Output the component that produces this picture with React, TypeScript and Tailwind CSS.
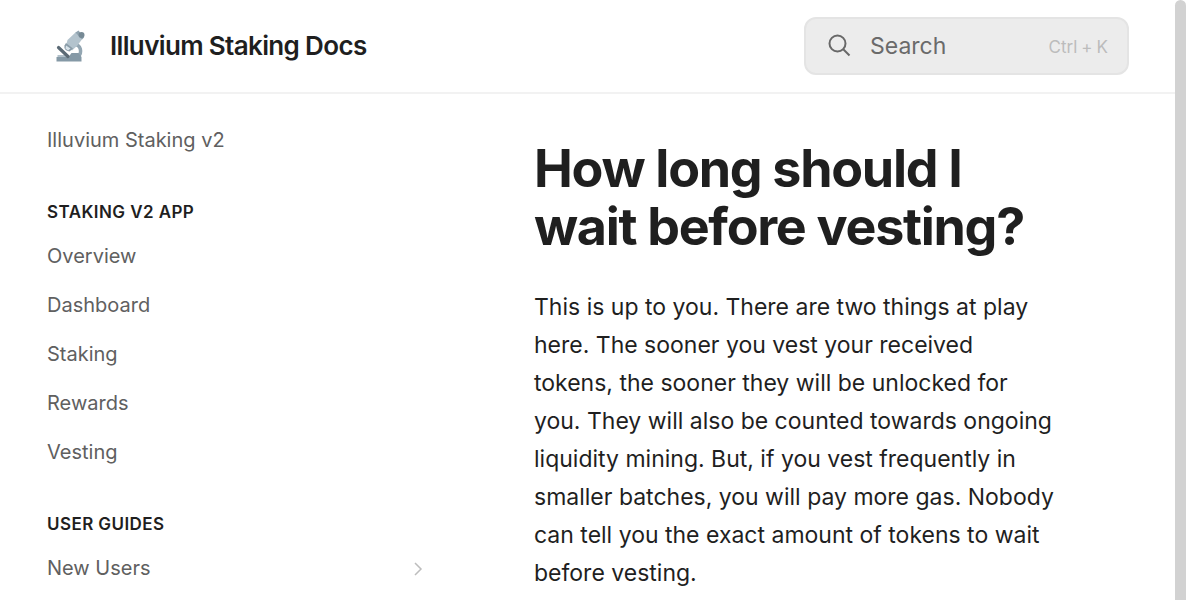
const font = "font-['Inter',sans-serif]";

function Microscope() {
  return (
    <svg viewBox="0 0 32 32" className="size-8 shrink-0" aria-hidden="true">
      <path d="M20 14.500c7 0 8.500 8 4 12.500" fill="none" stroke="#93a6b2" strokeWidth="3.500" />
      <path d="M2.500 27h12l3-4h7l3 4v4.500h-25z" fill="#8599a6" />
      <path d="M3.500 25h8l2 2h-10z" fill="#b0bfc9" />
      <path d="M4.500 17.500 14 26.500" stroke="#5b6a75" strokeWidth="3.200" strokeLinecap="round" />
      <path d="m13.500 10 8.500-8 7 6-6 8-5 4.500-6-5z" fill="#b3c3cd" />
      <path d="m12 13 7 5.500-3.500 3q-6-1-5-6z" fill="#8a9ca8" />
      <path d="m12 15.500 4.500 3-2.500 2-2.500-2z" fill="#d8e3ea" />
      <path d="m21.500 2.500 3-2 5.500 7-2 2z" fill="#91a4b0" />
      <circle cx="27.500" cy="5" r="3" fill="#768995" />
    </svg>
  );
}

function NavLink({ children, expandable = false }: { children: string; expandable?: boolean }) {
  return (
    <li>
      <a href="#" className="flex items-center justify-between py-3 pr-3 text-xl leading-[25px] text-[#606060]">
        {children}
        {expandable && (
          <svg viewBox="0 0 16 16" className="size-4 fill-none stroke-[#bdbdbd] stroke-[1.5]" aria-hidden="true">
            <path d="m4 2 6 6-6 6" />
          </svg>
        )}
      </a>
    </li>
  );
}

function NavHeading({ children }: { children: string }) {
  return <h2 className="mt-[35px] mb-2 text-[17px] leading-6 font-semibold tracking-wide text-[#1f1f1f] uppercase">{children}</h2>;
}

export default function App() {
  return (
    <div className={`flex h-screen overflow-hidden bg-white text-[#1f1f1f] ${font}`}>
      <div className="min-w-0 flex-1">
        <header className="flex items-center justify-between border-b-2 border-[#f2f2f2] py-[17px] pr-[46px] pl-[54px]">
          <a href="#" className="flex items-center gap-6">
            <Microscope />
            <span className="text-[26px] leading-8 font-semibold tracking-tight">Illuvium Staking Docs</span>
          </a>
          <label className="flex h-[58px] w-[325px] items-center rounded-xl border-2 border-[#e4e4e4] bg-[#ececec] pr-[19px] pl-[22px]">
            <svg viewBox="0 0 24 24" className="size-6 shrink-0 fill-none stroke-[#686868] stroke-2" aria-hidden="true">
              <circle cx="9.500" cy="9.500" r="8" />
              <path d="m15 15 6.500 6.500" />
            </svg>
            <input
              type="search"
              aria-label="Search"
              placeholder="Search"
              className="ml-[18px] min-w-0 flex-1 bg-transparent text-[23px] leading-8 outline-none placeholder:text-[#6a6a6a]"
            />
            <kbd className="flex gap-1 pt-0.5 font-['Inter',sans-serif] text-[17px] leading-6 text-[#bcbcbc]">
              <span>Ctrl</span>
              <span>+</span>
              <span>K</span>
            </kbd>
          </label>
        </header>
        <div className="flex px-[47px]">
          <nav className="w-[392px] shrink-0 pt-[22px]" aria-label="Docs">
            <ul>
              <NavLink>Illuvium Staking v2</NavLink>
            </ul>
            <NavHeading>Staking v2 App</NavHeading>
            <ul>
              <NavLink>Overview</NavLink>
              <NavLink>Dashboard</NavLink>
              <NavLink>Staking</NavLink>
              <NavLink>Rewards</NavLink>
              <NavLink>Vesting</NavLink>
            </ul>
            <NavHeading>User Guides</NavHeading>
            <ul>
              <NavLink expandable>New Users</NavLink>
            </ul>
          </nav>
          <main className="ml-[95px] min-w-0 flex-1 pt-[46px] pr-[72px]">
            <h1 className="text-[52px] leading-[58px] font-bold tracking-tight">How long should I wait before vesting?</h1>
            <p className="mt-8 text-[23px] leading-[38px]">
              This is up to you. There are two things at play here. The sooner you vest your received tokens, the sooner
              they will be unlocked for you. They will also be counted towards ongoing liquidity mining. But, if you vest
              frequently in smaller batches, you will pay more gas. Nobody can tell you the exact amount of tokens to wait
              before vesting.
            </p>
          </main>
        </div>
      </div>
      <div className="w-[11px] shrink-0 rounded-t-full bg-[#d2d2d2]" aria-hidden="true" />
    </div>
  );
}
